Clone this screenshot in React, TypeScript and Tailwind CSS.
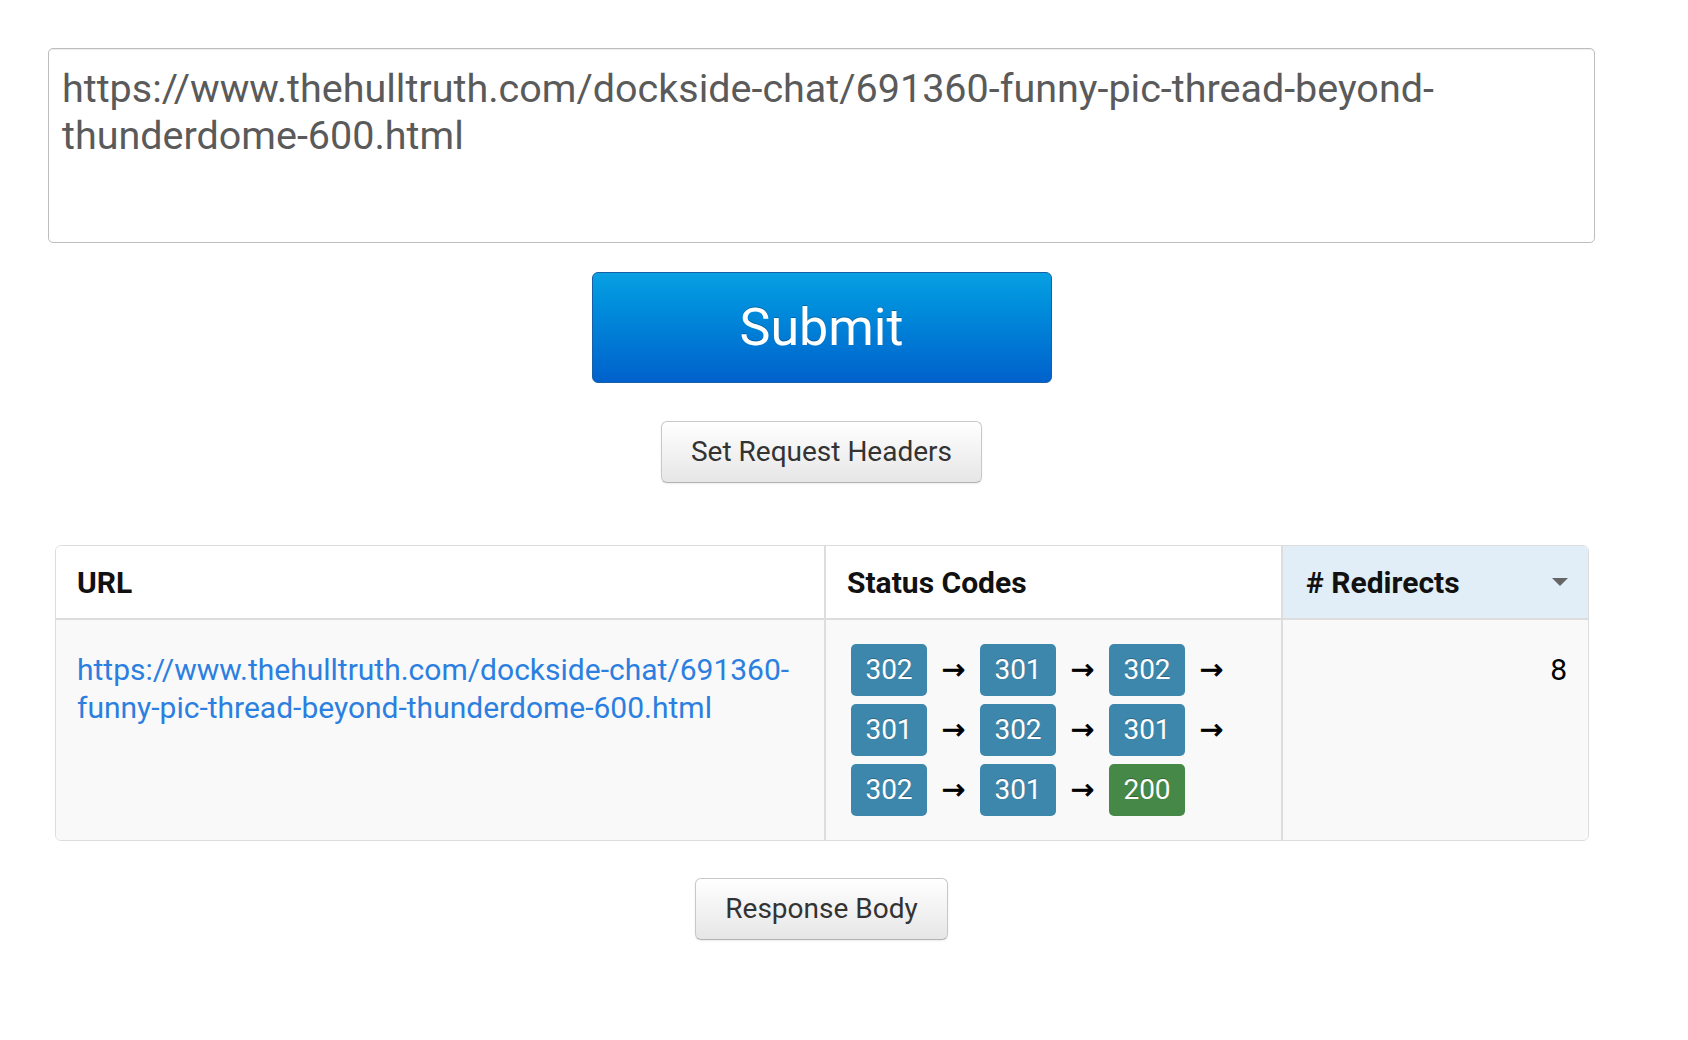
import React from 'react'

const url = 'https://www.thehulltruth.com/dockside-chat/691360-funny-pic-thread-beyond-thunderdome-600.html'

const codes = ['302', '301', '302', '301', '302', '301', '302', '301', '200']

function Badge({ code }: { code: string }) {
  const ok = code === '200'
  return (
    <span
      className={
        'inline-flex h-[52px] w-[76px] items-center justify-center rounded-[5px] text-[28px] text-white [text-shadow:0_-1px_0_rgba(0,0,0,0.25)] ' +
        (ok ? 'bg-[#468847]' : 'bg-[#3d87ad]')
      }
    >
      {code}
    </span>
  )
}

function GrayButton({ children }: { children: React.ReactNode }) {
  return (
    <button className="h-[62px] rounded-[6px] border border-[#c8c8c8] border-b-[#b3b3b3] bg-gradient-to-b from-white to-[#e6e6e6] px-[29px] text-[28px] text-[#333] shadow-[0_1px_2px_rgba(0,0,0,0.08)]">
      {children}
    </button>
  )
}

export default function App() {
  return (
    <div className="min-h-screen bg-white font-[Roboto,'Liberation_Sans',sans-serif]">
      <div className="flex w-[1595px] flex-col pl-[48px] pt-[48px]">
        <textarea
          defaultValue={url}
          spellCheck={false}
          className="h-[195px] w-[1547px] resize-none rounded-[5px] border-[1.5px] border-[#bdbdbd] px-[13px] pt-[16px] text-[39.5px] leading-[47px] text-[#5a5a5a] shadow-[inset_0_1px_1px_rgba(0,0,0,0.075)] outline-none"
        />

        <div className="mt-[29px] flex justify-center">
          <button className="h-[111px] w-[460px] rounded-[6px] border border-[#1560a6] bg-gradient-to-b from-[#0aa0e2] to-[#0061cc] text-[52px] text-white [text-shadow:0_-1px_0_rgba(0,0,0,0.25)]">
            Submit
          </button>
        </div>

        <div className="mt-[38px] flex justify-center">
          <GrayButton>Set Request Headers</GrayButton>
        </div>

        <div className="ml-[7px] mt-[62px] w-[1534px] overflow-hidden rounded-[6px] border border-[#ddd]">
          <div className="flex h-[74px] border-b-2 border-[#ddd] bg-white text-[30px] font-bold text-[#111]">
            <div className="flex w-[770px] items-center border-r-2 border-[#ddd] px-[21px]">URL</div>
            <div className="flex w-[457px] items-center border-r-2 border-[#ddd] px-[21px]">Status Codes</div>
            <div className="flex flex-1 items-center justify-between bg-[#e1eef8] pl-[23px] pr-[20px]">
              <span># Redirects</span>
              <svg width="16" height="8" viewBox="0 0 16 8">
                <path d="M0 0 L16 0 L8 8 Z" fill="#666" />
              </svg>
            </div>
          </div>
          <div className="flex bg-[#f9f9f9]">
            <div className="w-[770px] border-r-2 border-[#ddd] px-[21px] pt-[31px] text-[30px] leading-[38px]">
              <a href="#" className="break-words text-[#2b7fe0]">
                {url}
              </a>
            </div>
            <div className="w-[457px] border-r-2 border-[#ddd] pb-[20px] pl-[25px] pr-[21px] pt-[20px]">
              <div className="flex flex-wrap">
                {codes.map((c, i) => (
                  <div key={i} className="flex h-[60px] items-center">
                    <Badge code={c} />
                    {i < codes.length - 1 && (
                      <span className="flex w-[53px] justify-center font-['DejaVu_Sans',sans-serif] text-[28px] text-black [-webkit-text-stroke:0.8px_black]">
                        →
                      </span>
                    )}
                  </div>
                ))}
              </div>
            </div>
            <div className="flex-1 pr-[21px] pt-[31px] text-right text-[30px] leading-[38px] text-black">8</div>
          </div>
        </div>

        <div className="mt-[37px] flex justify-center">
          <GrayButton>Response Body</GrayButton>
        </div>
      </div>
    </div>
  )
}
